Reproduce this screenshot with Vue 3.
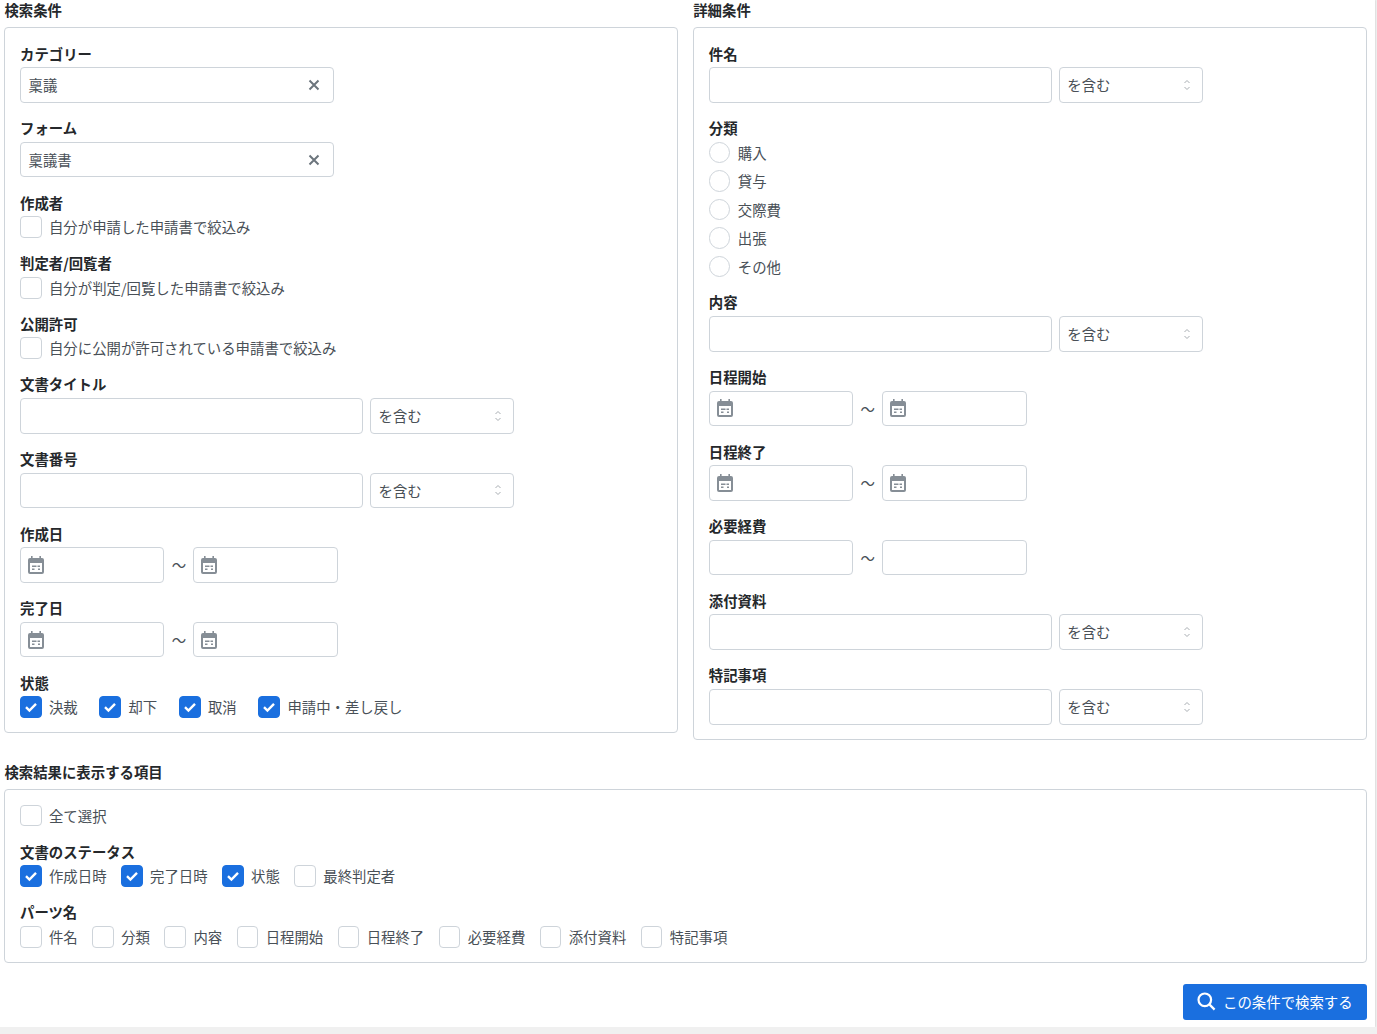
<script setup>
const parts = ['件名', '分類', '内容', '日程開始', '日程終了', '必要経費', '添付資料', '特記事項']
const radios = ['購入', '貸与', '交際費', '出張', 'その他']
const states = ['決裁', '却下', '取消', '申請中・差し戻し']
const statuses = [
  { t: '作成日時', on: true },
  { t: '完了日時', on: true },
  { t: '状態', on: true },
  { t: '最終判定者', on: false }
]
const leftChecks = [
  { label: '作成者', text: '自分が申請した申請書で絞込み' },
  { label: '判定者/回覧者', text: '自分が判定/回覧した申請書で絞込み' },
  { label: '公開許可', text: '自分に公開が許可されている申請書で絞込み' }
]
</script>

<template>
  <div class="page">
    <div class="columns">
      <section class="col">
        <h2 class="title">検索条件</h2>
        <div class="panel">
          <div class="field">
            <div class="label">カテゴリー</div>
            <div class="box combo">
              <span>稟議</span>
              <svg class="x" width="12" height="12" viewBox="0 0 12 12"><path d="M1.5 1.5l9 9M10.5 1.5l-9 9" /></svg>
            </div>
          </div>
          <div class="field">
            <div class="label">フォーム</div>
            <div class="box combo">
              <span>稟議書</span>
              <svg class="x" width="12" height="12" viewBox="0 0 12 12"><path d="M1.5 1.5l9 9M10.5 1.5l-9 9" /></svg>
            </div>
          </div>
          <div v-for="c in leftChecks" :key="c.label" class="field">
            <div class="label">{{ c.label }}</div>
            <div class="checks">
              <label class="check"><span class="cb"></span>{{ c.text }}</label>
            </div>
          </div>
          <div v-for="l in ['文書タイトル', '文書番号']" :key="l" class="field">
            <div class="label">{{ l }}</div>
            <div class="row">
              <input class="box text" type="text" />
              <div class="box select">
                <span>を含む</span>
                <svg width="8" height="12" viewBox="0 0 8 12"><path d="M1.5 4L4 1.5 6.5 4M1.5 8L4 10.5 6.5 8" /></svg>
              </div>
            </div>
          </div>
          <div v-for="l in ['作成日', '完了日']" :key="l" class="field">
            <div class="label">{{ l }}</div>
            <div class="range">
              <div class="box date">
                <svg width="16" height="18" viewBox="0 0 16 18"><path class="cal" fill-rule="evenodd" d="M3 0h1.6v2h6.8V0H13v2h1a2 2 0 0 1 2 2v12a2 2 0 0 1-2 2H2a2 2 0 0 1-2-2V4a2 2 0 0 1 2-2h1zM2 7v9h12V7zM4 9.5h4.5V11H4zM9.5 9.5H12V11H9.5zM4 12.5h2.5V14H4zM10 12.5h2V14h-2z" /></svg>
              </div>
              <span class="tilde">〜</span>
              <div class="box date">
                <svg width="16" height="18" viewBox="0 0 16 18"><path class="cal" fill-rule="evenodd" d="M3 0h1.6v2h6.8V0H13v2h1a2 2 0 0 1 2 2v12a2 2 0 0 1-2 2H2a2 2 0 0 1-2-2V4a2 2 0 0 1 2-2h1zM2 7v9h12V7zM4 9.5h4.5V11H4zM9.5 9.5H12V11H9.5zM4 12.5h2.5V14H4zM10 12.5h2V14h-2z" /></svg>
              </div>
            </div>
          </div>
          <div class="field last">
            <div class="label">状態</div>
            <div class="checks wide">
              <label v-for="s in states" :key="s" class="check">
                <span class="cb on">
                  <svg width="14" height="14" viewBox="0 0 14 14"><path d="M2 7.2l3.4 3.3L12 3.8" /></svg>
                </span>{{ s }}
              </label>
            </div>
          </div>
        </div>
      </section>

      <section class="col">
        <h2 class="title">詳細条件</h2>
        <div class="panel">
          <div class="field">
            <div class="label">件名</div>
            <div class="row">
              <input class="box text" type="text" />
              <div class="box select">
                <span>を含む</span>
                <svg width="8" height="12" viewBox="0 0 8 12"><path d="M1.5 4L4 1.5 6.5 4M1.5 8L4 10.5 6.5 8" /></svg>
              </div>
            </div>
          </div>
          <div class="field">
            <div class="label">分類</div>
            <div class="radios">
              <label v-for="r in radios" :key="r" class="check"><span class="cb round"></span>{{ r }}</label>
            </div>
          </div>
          <div class="field">
            <div class="label">内容</div>
            <div class="row">
              <input class="box text" type="text" />
              <div class="box select">
                <span>を含む</span>
                <svg width="8" height="12" viewBox="0 0 8 12"><path d="M1.5 4L4 1.5 6.5 4M1.5 8L4 10.5 6.5 8" /></svg>
              </div>
            </div>
          </div>
          <div v-for="l in ['日程開始', '日程終了']" :key="l" class="field">
            <div class="label">{{ l }}</div>
            <div class="range">
              <div class="box date">
                <svg width="16" height="18" viewBox="0 0 16 18"><path class="cal" fill-rule="evenodd" d="M3 0h1.6v2h6.8V0H13v2h1a2 2 0 0 1 2 2v12a2 2 0 0 1-2 2H2a2 2 0 0 1-2-2V4a2 2 0 0 1 2-2h1zM2 7v9h12V7zM4 9.5h4.5V11H4zM9.5 9.5H12V11H9.5zM4 12.5h2.5V14H4zM10 12.5h2V14h-2z" /></svg>
              </div>
              <span class="tilde">〜</span>
              <div class="box date">
                <svg width="16" height="18" viewBox="0 0 16 18"><path class="cal" fill-rule="evenodd" d="M3 0h1.6v2h6.8V0H13v2h1a2 2 0 0 1 2 2v12a2 2 0 0 1-2 2H2a2 2 0 0 1-2-2V4a2 2 0 0 1 2-2h1zM2 7v9h12V7zM4 9.5h4.5V11H4zM9.5 9.5H12V11H9.5zM4 12.5h2.5V14H4zM10 12.5h2V14h-2z" /></svg>
              </div>
            </div>
          </div>
          <div class="field">
            <div class="label">必要経費</div>
            <div class="range">
              <input class="box date" type="text" />
              <span class="tilde">〜</span>
              <input class="box date" type="text" />
            </div>
          </div>
          <div v-for="(l, i) in ['添付資料', '特記事項']" :key="l" class="field" :class="{ last: i === 1 }">
            <div class="label">{{ l }}</div>
            <div class="row">
              <input class="box text" type="text" />
              <div class="box select">
                <span>を含む</span>
                <svg width="8" height="12" viewBox="0 0 8 12"><path d="M1.5 4L4 1.5 6.5 4M1.5 8L4 10.5 6.5 8" /></svg>
              </div>
            </div>
          </div>
        </div>
      </section>
    </div>

    <section class="result">
      <h2 class="title">検索結果に表示する項目</h2>
      <div class="panel">
        <div class="field">
          <div class="checks">
            <label class="check"><span class="cb"></span>全て選択</label>
          </div>
        </div>
        <div class="field">
          <div class="label">文書のステータス</div>
          <div class="checks">
            <label v-for="s in statuses" :key="s.t" class="check">
              <span class="cb" :class="{ on: s.on }">
                <svg v-if="s.on" width="14" height="14" viewBox="0 0 14 14"><path d="M2 7.2l3.4 3.3L12 3.8" /></svg>
              </span>{{ s.t }}
            </label>
          </div>
        </div>
        <div class="field last">
          <div class="label">パーツ名</div>
          <div class="checks">
            <label v-for="p in parts" :key="p" class="check"><span class="cb"></span>{{ p }}</label>
          </div>
        </div>
      </div>
    </section>

    <div class="actions">
      <button class="search" type="button">
        <svg width="19" height="19" viewBox="0 0 19 19"><circle cx="7.8" cy="7.8" r="6.3" /><path d="M12.6 12.6l5 5" /></svg>
        この条件で検索する
      </button>
    </div>
  </div>
</template>

<style>
html, body { margin: 0; background: #f0f0f0; }
</style>

<style scoped>
.page {
  box-sizing: border-box;
  width: 1375px;
  height: 1027px;
  padding: 0 8px 0 4.4px;
  background: #fff;
  box-shadow: 0 0 2px rgba(0, 0, 0, 0.2);
  font-family: "Noto Sans CJK JP", "Noto Sans", sans-serif;
  font-size: 14.4px;
  line-height: 21.6px;
  color: #3a3f44;
}
.columns { display: flex; align-items: flex-start; gap: 15px; }
.col { flex: 1 1 0; min-width: 0; }
.title {
  margin: 0 0 8.2px;
  font-size: 14.4px;
  line-height: 19px;
  font-weight: 700;
  color: #25282b;
}
.panel {
  box-sizing: border-box;
  padding: 14.4px 15px 14px 14.6px;
  border: 1px solid #ced4da;
  border-radius: 4px;
}
.field { margin-bottom: 14.4px; }
.field.last { margin-bottom: 0; }
.label {
  margin-bottom: 3px;
  font-weight: 700;
  color: #25282b;
}
.box {
  box-sizing: border-box;
  height: 35.6px;
  margin: 0;
  border: 1px solid #ced4da;
  border-radius: 4px;
  background: #fff;
  font: inherit;
  color: #495057;
}
.combo {
  display: flex;
  align-items: center;
  justify-content: space-between;
  width: 314px;
  padding: 0 13px 0 7.5px;
}
.x { fill: none; stroke: #6c757d; stroke-width: 2; }
.row { display: flex; gap: 7px; }
.text { width: 343px; padding: 0 7px; }
.select {
  display: flex;
  align-items: center;
  justify-content: space-between;
  width: 144.5px;
  padding: 0 11px 0 7.5px;
}
.select svg { fill: none; stroke: #a9aeb3; stroke-width: 1; }
.range { display: flex; align-items: center; }
.date {
  display: flex;
  align-items: center;
  width: 144.4px;
  padding: 0 7px;
}
.cal { fill: #868e96; }
.tilde { width: 29px; text-align: center; color: #495057; }
.checks { display: flex; gap: 14.46px; }
.checks.wide { gap: 21.7px; }
.radios { display: flex; flex-direction: column; gap: 6.85px; }
.check { display: flex; align-items: center; gap: 7.4px; height: 21.6px; color: #495057; }
.cb {
  box-sizing: border-box;
  flex: none;
  display: flex;
  align-items: center;
  justify-content: center;
  width: 21.6px;
  height: 21.6px;
  border: 1px solid #ced4da;
  border-radius: 4px;
  background: #fff;
}
.cb.round { border-radius: 50%; }
.cb.on { border-color: #1a6fdf; background: #1a6fdf; }
.cb.on svg { fill: none; stroke: #fff; stroke-width: 2.4; }
.result { margin-top: 22.7px; }
.actions { display: flex; justify-content: flex-end; margin-top: 21.4px; }
.search {
  display: flex;
  align-items: center;
  gap: 7px;
  box-sizing: border-box;
  height: 35.6px;
  padding: 0 14.4px;
  border: 0;
  border-radius: 3px;
  background: #1a6fdf;
  color: #fff;
  font: inherit;
}
.search svg { fill: none; stroke: #fff; stroke-width: 2.2; }
</style>
